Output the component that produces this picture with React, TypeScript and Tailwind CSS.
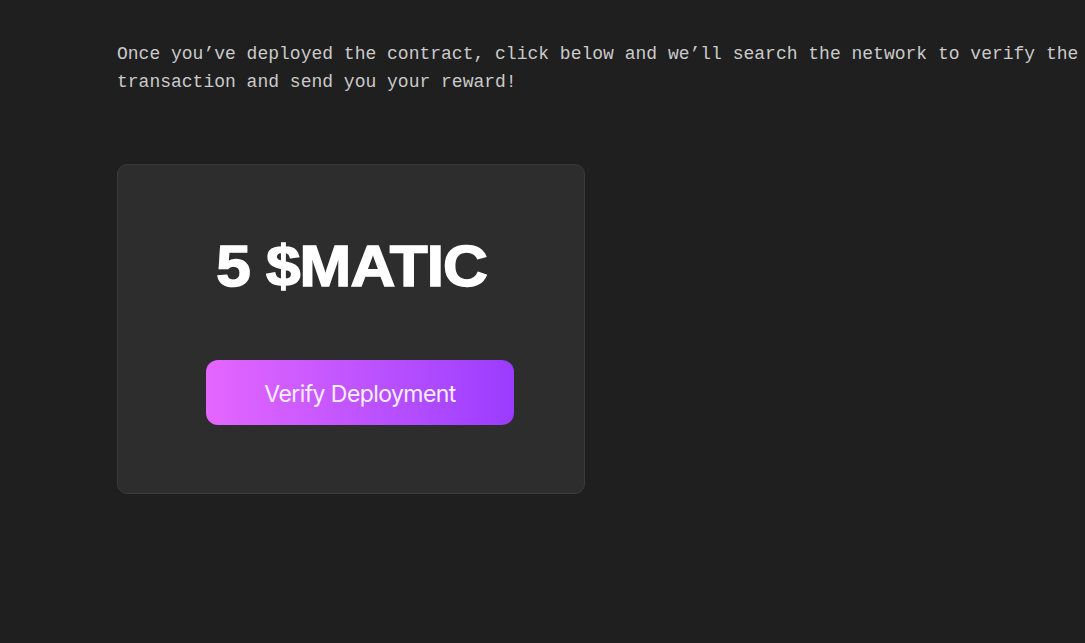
import React from 'react';

const RewardCard: React.FC = () => {
  return (
    <div className="w-[468px] h-[330px] rounded-[10px] border border-[#3a3a3a] bg-[#2d2d2d] flex flex-col items-center">
      <h2
        className="mt-[72px] text-white text-[58px] leading-none font-black tracking-[-0.015em] scale-x-[1.07] [-webkit-text-stroke:1.5px_white]"
        style={{ fontFamily: '"Liberation Sans", Arial, sans-serif' }}
      >
        5 $MATIC
      </h2>
      <button
        className="mt-[65px] ml-[18px] w-[308px] h-[65px] pt-[3px] rounded-[12px] bg-gradient-to-r from-[#e566ff] to-[#9b3bff] text-[#fbeeff] text-[23px] tracking-[-0.025em]"
        style={{ fontFamily: 'Inter, "Noto Sans", sans-serif' }}
      >
        Verify Deployment
      </button>
    </div>
  );
};

const App: React.FC = () => {
  return (
    <div className="min-h-[643px] w-full overflow-hidden bg-[#1f1f1f] pl-[117px] pt-[40px]">
      <p
        className="w-[1000px] text-[18px] leading-[28px] text-[#cacaca]"
        style={{ fontFamily: '"Liberation Mono", "DejaVu Sans Mono", monospace' }}
      >
        Once you’ve deployed the contract, click below and we’ll search the network to verify the transaction and send you your reward!
      </p>
      <div className="mt-[68px]">
        <RewardCard />
      </div>
    </div>
  );
};

export default App;
